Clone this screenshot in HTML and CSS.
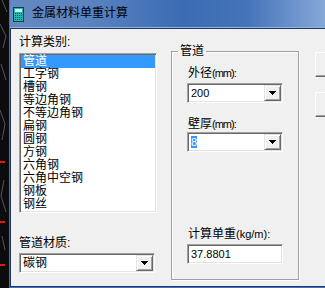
FILE: index.html
```html
<!DOCTYPE html>
<html lang="zh-CN">
<head>
  <meta charset="UTF-8">
  <title>金属材料单重计算</title>
  <link rel="stylesheet" href="styles.css">
</head>
<body>
  <div class="screen">
    <div class="desk">
      <svg width="9" height="288" viewBox="0 0 9 288">
        <rect width="9" height="288" fill="#0c0c0c"/>
        <path d="M2 0 L7 12 M0 24 L6 36 L3 48 M1 64 L6 80 M0 110 L5 124 L2 140 M4 180 L1 196 L6 212 M2 236 L5 250" stroke="#555" stroke-width="1" fill="none"/>
        <rect x="0" y="161" width="5" height="2" fill="#e01818"/>
        <rect x="0" y="221" width="5" height="2" fill="#e01818"/>
        <rect x="0" y="264" width="5" height="2" fill="#e01818"/>
      </svg>
    </div>
    <div class="window">
      <div class="titlebar">
        <svg class="app-icon" width="11" height="15" viewBox="0 0 11 15">
          <rect x="0.5" y="0.5" width="10" height="14" fill="#27b5b0" stroke="#0d3f3f"/>
          <rect x="2" y="2" width="7" height="3" fill="#c9f1ee"/>
          <g fill="#0d4f4d">
            <rect x="2" y="6" width="1" height="1"/><rect x="4" y="6" width="1" height="1"/><rect x="6" y="6" width="1" height="1"/><rect x="8" y="6" width="1" height="1"/>
            <rect x="2" y="8" width="1" height="1"/><rect x="4" y="8" width="1" height="1"/><rect x="6" y="8" width="1" height="1"/><rect x="8" y="8" width="1" height="1"/>
            <rect x="2" y="10" width="1" height="1"/><rect x="4" y="10" width="1" height="1"/><rect x="6" y="10" width="1" height="1"/><rect x="8" y="10" width="1" height="1"/>
            <rect x="2" y="12" width="1" height="1"/><rect x="4" y="12" width="1" height="1"/><rect x="6" y="12" width="1" height="1"/><rect x="8" y="12" width="1" height="1"/>
          </g>
        </svg>
        <span class="title">金属材料单重计算</span>
      </div>

      <div class="client">
        <div class="col-left">
          <div class="label">计算类别:</div>
          <ul class="listbox">
            <li class="selected">管道</li>
            <li>工字钢</li>
            <li>槽钢</li>
            <li>等边角钢</li>
            <li>不等边角钢</li>
            <li>扁钢</li>
            <li>圆钢</li>
            <li>方钢</li>
            <li>六角钢</li>
            <li>六角中空钢</li>
            <li>钢板</li>
            <li>钢丝</li>
          </ul>
          <div class="label material-label">管道材质:</div>
          <div class="combo combo-material">
            <span class="combo-text">碳钢</span>
            <span class="drop-btn"><svg width="7" height="4" viewBox="0 0 7 4"><path d="M0 0h7v1h-7zM1 1h5v1h-5zM2 2h3v1h-3zM3 3h1v1h-1z" fill="#000"/></svg></span>
          </div>
        </div>

        <fieldset class="group">
          <legend>管道</legend>
          <div class="group-body">
            <div class="label first">外径<span class="lat tight">(mm):</span></div>
            <div class="combo combo-small">
              <span class="combo-text lat">200</span>
              <span class="drop-btn"><svg width="7" height="4" viewBox="0 0 7 4"><path d="M0 0h7v1h-7zM1 1h5v1h-5zM2 2h3v1h-3zM3 3h1v1h-1z" fill="#000"/></svg></span>
            </div>
            <div class="label second">壁厚<span class="lat tight">(mm):</span></div>
            <div class="combo combo-small thick">
              <span class="combo-text lat"><span class="sel">8</span></span>
              <span class="drop-btn"><svg width="7" height="4" viewBox="0 0 7 4"><path d="M0 0h7v1h-7zM1 1h5v1h-5zM2 2h3v1h-3zM3 3h1v1h-1z" fill="#000"/></svg></span>
            </div>
            <div class="label result-label">计算单重<span class="lat">(kg/m):</span></div>
            <div class="textbox lat">37.8801</div>
          </div>
        </fieldset>

        <div class="buttons">
          <div class="btn"></div>
          <div class="btn"></div>
        </div>
      </div>
    </div>
  </div>
</body>
</html>
```

FILE: styles.css
```css
body {
  margin: 0;
  padding: 0;
  background: #0c0c0c;
  font-family: "Liberation Sans", "Noto Sans CJK SC", sans-serif;
  font-size: 12px;
  line-height: 13px;
  color: #000;
}

.screen {
  display: flex;
  width: 325px;
  height: 288px;
  overflow: hidden;
}

.desk {
  flex: none;
  width: 9px;
}

.desk svg {
  display: block;
}

.window {
  flex: 1;
  display: flex;
  flex-direction: column;
  background: #4271b4;
  padding: 0 0 1px 1px;
  min-width: 0;
}

.titlebar {
  flex: none;
  height: 27px;
  display: flex;
  align-items: center;
  padding-left: 3px;
  background: linear-gradient(to right, #6489c2 0%, #5a83c0 25%, #3b6bb3 55%, #4473b8 75%, #86a8d8 100%);
  border-bottom: 1px solid #93b3e2;
}

.app-icon {
  display: block;
  margin-right: 8px;
  margin-top: 1px;
}

.title {
  font-size: 12px;
  color: #000;
}

.client {
  flex: 1;
  display: flex;
  align-items: flex-start;
  background: #f0f0f0;
  border-top: 1px solid #1d3866;
  border-left: 1px solid #1d3866;
  border-bottom: 1px solid #1d3866;
  padding: 7px 0 0 8px;
}

.col-left {
  flex: none;
  width: 138px;
}

.label {
  height: 13px;
  white-space: nowrap;
}

.lat {
  font-size: 11px;
}

.tight {
  letter-spacing: -1px;
}

.listbox {
  list-style: none;
  margin: 4px 0 0;
  padding: 0;
  box-sizing: border-box;
  height: 160px;
  background: #fff;
  border: 1px solid;
  border-color: #a0a0a0 #fff #fff #a0a0a0;
  box-shadow: inset 1px 1px 0 #696969, inset -1px -1px 0 #e3e3e3;
  padding: 1px;
  overflow: hidden;
}

.listbox li {
  height: 13px;
  padding-left: 2px;
}

.listbox li.selected {
  background: #3399ff;
  color: #fff;
}

.material-label {
  margin-top: 24px;
}

.combo {
  display: flex;
  align-items: center;
  box-sizing: border-box;
  height: 20px;
  background: #fff;
  border: 1px solid;
  border-color: #a0a0a0 #fff #fff #a0a0a0;
  box-shadow: inset 1px 1px 0 #696969, inset -1px -1px 0 #e3e3e3;
  padding: 1px;
}

.combo-text {
  flex: 1;
  padding-left: 2px;
  white-space: nowrap;
}

.combo-material {
  width: 136px;
  margin-top: 3px;
}

.drop-btn {
  flex: none;
  box-sizing: border-box;
  width: 17px;
  height: 16px;
  display: flex;
  align-items: center;
  justify-content: center;
  background: #f0f0f0;
  border: 1px solid;
  border-color: #e3e3e3 #696969 #696969 #e3e3e3;
  box-shadow: inset 1px 1px 0 #fff, inset -1px -1px 0 #a0a0a0;
}

.drop-btn svg {
  display: block;
  shape-rendering: crispEdges;
}

.group {
  flex: none;
  box-sizing: border-box;
  width: 128px;
  height: 235px;
  margin: 9px 0 0 14px;
  padding: 0 0 0 6px;
  border: 1px solid #a0a0a0;
  box-shadow: inset 1px 1px 0 #fff, 1px 1px 0 #fff;
  min-width: 0;
}

.group legend {
  padding: 0 2px;
  line-height: 13px;
}

.group-body {
  padding-left: 10px;
}

.label.first {
  margin-top: 9px;
}

.combo-small {
  width: 96px;
  margin-left: -1px;
  margin-top: 3px;
}

.label.second {
  margin-top: 15px;
}

.combo-small.thick {
  margin-top: 1px;
}

.sel {
  background: #3399ff;
  color: #fff;
}

.result-label {
  margin-top: 76px;
}

.textbox {
  box-sizing: border-box;
  width: 96px;
  height: 20px;
  margin: 3px 0 0 -1px;
  padding: 3px 0 0 3px;
  background: #fff;
  border: 1px solid;
  border-color: #a0a0a0 #fff #fff #a0a0a0;
  box-shadow: inset 1px 1px 0 #696969, inset -1px -1px 0 #e3e3e3;
}

.buttons {
  flex: none;
  margin: 16px 0 0 16px;
  display: flex;
  flex-direction: column;
  gap: 15px;
}

.btn {
  box-sizing: border-box;
  width: 75px;
  height: 25px;
  background: #f0f0f0;
  border: 1px solid;
  border-color: #fff #696969 #696969 #fff;
  box-shadow: inset -1px -1px 0 #a0a0a0;
}
```
